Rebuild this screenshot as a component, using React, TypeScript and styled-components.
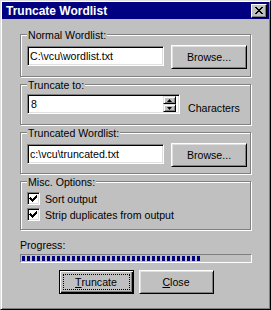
import React from 'react';
import styled, { createGlobalStyle } from 'styled-components';

const GlobalStyle = createGlobalStyle`
  html, body {
    margin: 0;
    padding: 0;
    background: #c0c0c0;
  }
  body {
    font-family: 'Liberation Sans', Arial, sans-serif;
    font-size: 10.6px;
    color: #000;
  }
  * { box-sizing: border-box; }
`;

const Window = styled.div`
  width: 271px;
  height: 310px;
  display: flex;
  flex-direction: column;
  background: #c0c0c0;
  border: 1px solid;
  border-color: #dfdfdf #000 #000 #dfdfdf;
  box-shadow: inset 1px 1px #fff, inset -1px -1px #808080;
  padding: 1px;
`;

const TitleBar = styled.div`
  height: 17px;
  background: #000080;
  color: #fff;
  display: flex;
  align-items: center;
  justify-content: space-between;
  padding: 0 2px 0 4px;
  font-weight: bold;
  font-size: 12px;
`;

const TitleButton = styled.div`
  width: 16px;
  height: 14px;
  background: #c0c0c0;
  border: 1px solid;
  border-color: #fff #000 #000 #fff;
  box-shadow: inset -1px -1px #808080;
  display: flex;
  align-items: center;
  justify-content: center;
`;

const Body = styled.div`
  display: flex;
  flex-direction: column;
  padding: 15px 18px 0 18px;
`;

const GroupStack = styled.div`
  display: flex;
  flex-direction: column;
  gap: 7px;
`;

const Group = styled.div<{ $h: number; $top?: number }>`
  position: relative;
  height: ${p => p.$h}px;
  border: 1px solid #808080;
  box-shadow: inset 1px 1px #fff, 1px 1px #fff;
  padding: ${p => p.$top ?? 10}px 2px 0 6px;
`;

const Legend = styled.span`
  position: absolute;
  top: -6px;
  left: 6px;
  padding: 0 1px;
  background: #c0c0c0;
  line-height: 13px;
`;

const Row = styled.div<{ $gap?: number }>`
  display: flex;
  align-items: flex-start;
  gap: ${p => p.$gap ?? 7}px;
`;

const TextField = styled.input`
  width: 137px;
  height: 20px;
  margin: 1px 0 0;
  background: #fff;
  border: 1px solid;
  border-color: #808080 #fff #fff #808080;
  box-shadow: inset 1px 1px #000, inset -1px -1px #dfdfdf;
  padding: 0 2px;
  font: inherit;
  color: #000;
  outline: none;
`;

const Button = styled.button<{ $w: number; $default?: boolean }>`
  width: ${p => p.$w}px;
  height: 24px;
  padding: ${p => (p.$default ? '3px' : '0')};
  background: #c0c0c0;
  font: inherit;
  color: #000;
  display: flex;
  align-items: center;
  justify-content: center;
  border: 1px solid;
  border-color: ${p => (p.$default ? '#000' : '#fff #000 #000 #fff')};
  box-shadow: ${p =>
    p.$default
      ? 'inset 1px 1px #fff, inset -1px -1px #000, inset -2px -2px #808080'
      : 'inset 1px 1px #dfdfdf, inset -1px -1px #808080'};
`;

const FocusRing = styled.span`
  flex: 1;
  align-self: stretch;
  display: flex;
  align-items: center;
  justify-content: center;
  border: 1px dotted #000;
`;

const SpinField = styled.div`
  width: 153px;
  height: 20px;
  background: #fff;
  border: 1px solid;
  border-color: #808080 #fff #fff #808080;
  box-shadow: inset 1px 1px #000, inset -1px -1px #dfdfdf;
  padding: 1px 3px 1px 3px;
  display: flex;
  align-items: center;
`;

const SpinText = styled.span`
  flex: 1;
`;

const Spin = styled.div`
  display: flex;
  flex-direction: column;
  width: 13px;
  height: 16px;
`;

const SpinButton = styled.div`
  height: 8px;
  background: #c0c0c0;
  border: 1px solid;
  border-color: #dfdfdf #000 #000 #dfdfdf;
  box-shadow: inset 1px 1px #fff, inset -1px -1px #808080;
  display: flex;
  align-items: center;
  justify-content: center;
`;

const Unit = styled.span`
  margin-left: 8px;
  align-self: flex-end;
  line-height: 13px;
  margin-bottom: -1px;
`;

const Options = styled.div`
  display: flex;
  flex-direction: column;
  gap: 3px;
`;

const CheckRow = styled.div`
  display: flex;
  align-items: center;
  gap: 5px;
  height: 13px;
`;

const CheckBox = styled.div`
  width: 13px;
  height: 13px;
  background: #fff;
  border: 1px solid;
  border-color: #808080 #fff #fff #808080;
  box-shadow: inset 1px 1px #000, inset -1px -1px #dfdfdf;
  display: flex;
`;

const ProgressLabel = styled.div`
  margin-top: 9px;
  line-height: 13px;
`;

const ProgressBar = styled.div`
  width: 232px;
  height: 9px;
  margin-top: 2px;
  border: 1px solid;
  border-color: #808080 #fff #fff #808080;
  padding: 1px;
  display: flex;
`;

const ProgressFill = styled.div<{ $blocks: number }>`
  width: ${p => p.$blocks * 5}px;
  height: 100%;
  background: repeating-linear-gradient(to right, #000080 0 3px, transparent 3px 5px);
`;

const Footer = styled.div`
  display: flex;
  justify-content: center;
  gap: 5px;
  margin-top: 7px;
  padding-left: 1px;
`;

const Arrow = ({ up }: { up?: boolean }) => (
  <svg width="5" height="3" viewBox="0 0 5 3" style={{ display: 'block' }}>
    <path d={up ? 'M2.5 0 L5 3 L0 3 Z' : 'M0 0 L5 0 L2.5 3 Z'} fill="#000" />
  </svg>
);

const Check = () => (
  <svg width="11" height="11" viewBox="0 0 11 11" style={{ display: 'block' }} shapeRendering="crispEdges">
    <path d="M2 4h1v1h1v1h1v-1h1v-1h1v-1h1v-1h1v3h-1v1h-1v1h-1v1h-1v1h-1v-1h-1v-1h-1v-1h-1z" fill="#000" />
  </svg>
);

export default function App() {
  return (
    <>
      <GlobalStyle />
      <Window>
        <TitleBar>
          <span>Truncate Wordlist</span>
          <TitleButton>
            <svg width="8" height="7" viewBox="0 0 8 7" shapeRendering="crispEdges">
              <path d="M0 0h2v1h1v1h2v-1h1v-1h2v1h-1v1h-1v1h-1v1h1v1h1v1h1v1h-2v-1h-1v-1h-2v1h-1v1h-2v-1h1v-1h1v-1h1v-1h-1v-1h-1v-1h-1z" fill="#000" />
            </svg>
          </TitleButton>
        </TitleBar>
        <Body>
          <GroupStack>
            <Group $h={43}>
              <Legend>Normal Wordlist:</Legend>
              <Row>
                <TextField readOnly value="C:\vcu\wordlist.txt" />
                <Button $w={76}>Browse...</Button>
              </Row>
            </Group>
            <Group $h={41} $top={9}>
              <Legend>Truncate to:</Legend>
              <Row $gap={0}>
                <SpinField>
                  <SpinText>8</SpinText>
                  <Spin>
                    <SpinButton><Arrow up /></SpinButton>
                    <SpinButton><Arrow /></SpinButton>
                  </Spin>
                </SpinField>
                <Unit>Characters</Unit>
              </Row>
            </Group>
            <Group $h={42}>
              <Legend>Truncated Wordlist:</Legend>
              <Row>
                <TextField readOnly value="c:\vcu\truncated.txt" />
                <Button $w={76}>Browse...</Button>
              </Row>
            </Group>
            <Group $h={49}>
              <Legend>Misc. Options:</Legend>
              <Options>
                <CheckRow>
                  <CheckBox><Check /></CheckBox>
                  <span>Sort output</span>
                </CheckRow>
                <CheckRow>
                  <CheckBox><Check /></CheckBox>
                  <span>Strip duplicates from output</span>
                </CheckRow>
              </Options>
            </Group>
          </GroupStack>
          <ProgressLabel>Progress:</ProgressLabel>
          <ProgressBar>
            <ProgressFill $blocks={36} />
          </ProgressBar>
          <Footer>
            <Button $w={75} $default>
              <FocusRing><u>T</u>runcate</FocusRing>
            </Button>
            <Button $w={75}><span><u>C</u>lose</span></Button>
          </Footer>
        </Body>
      </Window>
    </>
  );
}
